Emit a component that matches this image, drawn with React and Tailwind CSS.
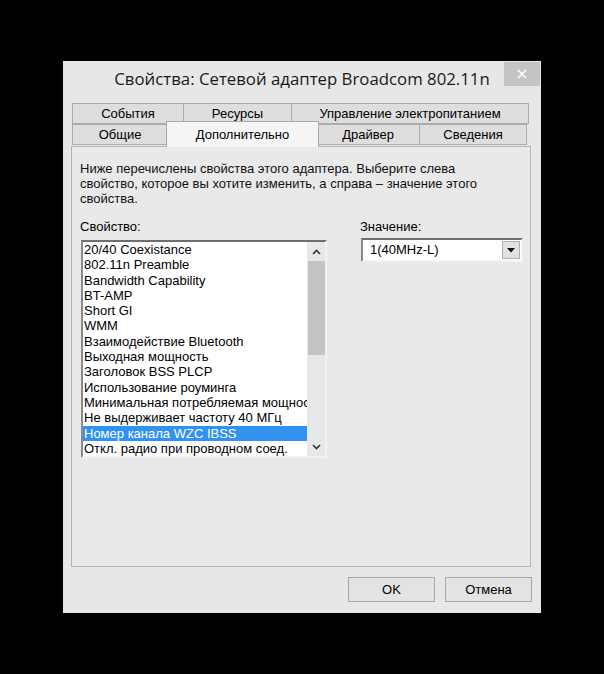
import React from 'react';

const items = [
  '20/40 Coexistance',
  '802.11n Preamble',
  'Bandwidth Capability',
  'BT-AMP',
  'Short GI',
  'WMM',
  'Взаимодействие Bluetooth',
  'Выходная мощность',
  'Заголовок BSS PLCP',
  'Использование роуминга',
  'Минимальная потребляемая мощность',
  'Не выдерживает частоту 40 МГц',
  'Номер канала WZC IBSS',
  'Откл. радио при проводном соед.',
];

function Tab({ label, w, selected }) {
  if (selected) {
    return (
      <div
        className={`${w} h-[26px] -mt-[3px] -mx-[2px] relative z-10 bg-[#f5f5f5] border border-b-0 border-[#a9a9a9] flex items-center justify-center text-[13px]`}
      >
        {label}
      </div>
    );
  }
  return (
    <div
      className={`${w} h-[21px] bg-[#dedede] border border-[#acacac] -ml-px first:ml-0 flex items-center justify-center text-[13px]`}
    >
      {label}
    </div>
  );
}

export default function App() {
  return (
    <div
      className="w-[604px] h-[674px] bg-black pt-[61px] pl-[63px] text-black"
      style={{ fontFamily: '"Liberation Sans", Arial, sans-serif' }}
    >
      <div className="w-[478px] h-[552px] bg-[#e7e7e7] relative flex flex-col">
        {/* title bar */}
        <div className="h-[34px] flex items-center justify-center">
          <span
            className="text-[16.8px] text-[#1a1a1a] mt-[1px]"
            style={{ fontFamily: '"Open Sans", "Noto Sans", sans-serif' }}
          >
            Свойства: Сетевой адаптер Broadcom 802.11n
          </span>
        </div>
        <div className="absolute top-[1px] right-[1px] w-[36px] h-[24px] bg-[#c4c4c4] flex items-center justify-center">
          <svg width="10" height="10" viewBox="0 0 10 10">
            <path d="M1 1L9 9M9 1L1 9" stroke="#fff" strokeWidth="1.6" />
          </svg>
        </div>

        {/* tabs */}
        <div className="mt-[8px] pl-[9px]">
          <div className="flex">
            <Tab label="События" w="w-[112px]" />
            <Tab label="Ресурсы" w="w-[109px]" />
            <Tab label="Управление электропитанием" w="w-[238px]" />
          </div>
          <div className="flex -mt-px pt-[1px]">
            <Tab label="Общие" w="w-[96px]" />
            <Tab label="Дополнительно" w="w-[153px]" selected />
            <Tab label="Драйвер" w="w-[104px]" />
            <Tab label="Сведения" w="w-[108px]" />
          </div>
        </div>

        {/* panel */}
        <div className="ml-[8px] -mt-px w-[460px] h-[421px] border border-[#b4b4b4] bg-[#e9e9e9] pt-[14px] pl-[8px] text-[13px]">
          <p className="leading-[15px] w-[420px] text-[#111]">
            Ниже перечислены свойства этого адаптера. Выберите слева свойство, которое вы хотите изменить, а справа – значение этого свойства.
          </p>
          <div className="flex mt-[13px]">
            <div className="w-[280px]">
              <div className="leading-[15px] h-[16px]">Свойство:</div>
              <div className="mt-[5px] ml-[1px] w-[246px] h-[218px] border-2 border-t-[#6e6e6e] border-l-[#8a8a8a] border-r-[#f2f2f2] border-b-[#f2f2f2] bg-white flex">
                <div className="flex-1 overflow-hidden">
                  {items.map((it, i) => (
                    <div
                      key={it}
                      className={`h-[15.3px] leading-[15.3px] pl-[1px] whitespace-nowrap ${
                        i === 12 ? 'bg-[#3193ef] text-white' : ''
                      }`}
                    >
                      {it}
                    </div>
                  ))}
                </div>
                <div className="w-[18px] bg-[#e8e8e8] flex flex-col items-center">
                  <div className="h-[19px] flex items-center justify-center">
                    <svg width="9" height="6" viewBox="0 0 9 6">
                      <path d="M1 5L4.5 1.5L8 5" stroke="#333" strokeWidth="1.6" fill="none" />
                    </svg>
                  </div>
                  <div className="w-[17px] h-[94px] bg-[#c3c3c3]" />
                  <div className="flex-1" />
                  <div className="h-[19px] flex items-center justify-center">
                    <svg width="9" height="6" viewBox="0 0 9 6">
                      <path d="M1 1L4.5 4.5L8 1" stroke="#333" strokeWidth="1.6" fill="none" />
                    </svg>
                  </div>
                </div>
              </div>
            </div>
            <div>
              <div className="leading-[15px] h-[16px]">Значение:</div>
              <div className="mt-[3px] ml-[1px] w-[162px] h-[24px] border-2 border-t-[#6e6e6e] border-l-[#8a8a8a] border-r-[#f2f2f2] border-b-[#f2f2f2] bg-white flex items-center">
                <span className="flex-1 pl-[7px]">1(40MHz-L)</span>
                <div className="w-[18px] h-[18px] mr-[1px] bg-[#e1e1e1] border border-[#b0b0b0] flex items-center justify-center">
                  <svg width="8" height="5" viewBox="0 0 8 5">
                    <path d="M0 0H8L4 4.5Z" fill="#111" />
                  </svg>
                </div>
              </div>
            </div>
          </div>
        </div>

        {/* buttons */}
        <div className="flex mt-[10px] pl-[285px] gap-[10px]">
          <button className="w-[87px] h-[25px] bg-[#e3e3e3] border border-[#a8a8a8] text-[13px]">
            OK
          </button>
          <button className="w-[87px] h-[25px] bg-[#e3e3e3] border border-[#a8a8a8] text-[13px]">
            Отмена
          </button>
        </div>
      </div>
    </div>
  );
}
